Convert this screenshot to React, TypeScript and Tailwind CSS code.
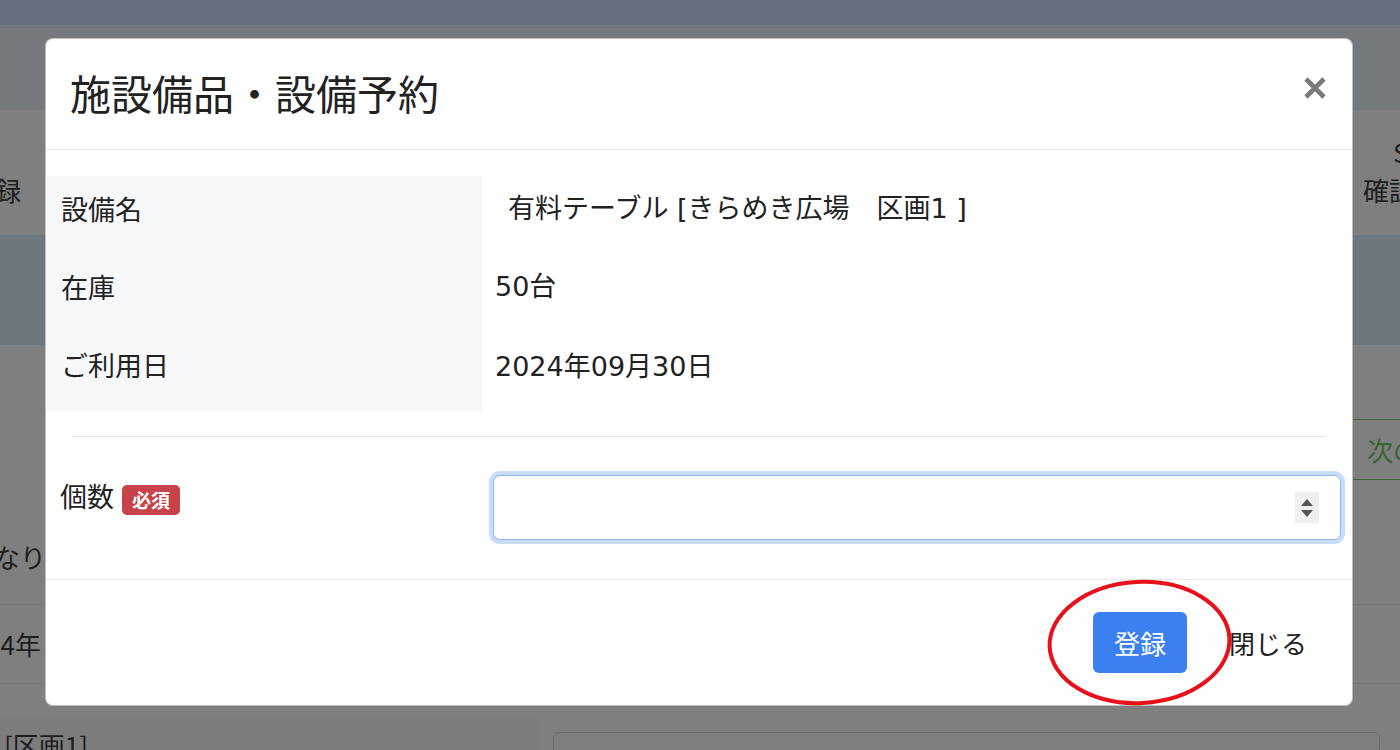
import React from "react";

function CloseIcon() {
  return (
    <svg width="24" height="24" viewBox="0 0 24 24">
      <path d="M3 3 L21 21 M21 3 L3 21" stroke="#7a7a7a" strokeWidth="4.6" strokeLinecap="butt" />
    </svg>
  );
}

function Spinner() {
  return (
    <div className="w-[24px] h-[31px] bg-[#efefef] flex flex-col items-center justify-center gap-[4px]">
      <svg width="12" height="7" viewBox="0 0 12 7">
        <path d="M6 0 L12 7 L0 7 Z" fill="#555" />
      </svg>
      <svg width="12" height="7" viewBox="0 0 12 7">
        <path d="M0 0 L12 0 L6 7 Z" fill="#555" />
      </svg>
    </div>
  );
}

export default function App() {
  return (
    <div className="relative w-[1400px] h-[750px] overflow-hidden bg-[#7f7f7f] font-['Noto_Sans_CJK_JP','Noto_Sans',sans-serif] text-[#1e1e1e]">
      {/* dimmed page behind the modal */}
      <div className="h-[25px] bg-[#64727b]" />
      <div className="h-[85px] bg-[#75787c]" />
      <div className="h-[125px] flex justify-between items-end pb-[26px] text-[26px] leading-[38px]">
        <div className="w-[21px] overflow-hidden flex justify-end whitespace-nowrap">登録</div>
        <div className="w-[37px] overflow-hidden whitespace-nowrap">
          <div className="pl-[30px]">S</div>
          <div>確認</div>
        </div>
      </div>
      <div className="h-[110px] bg-[#6d777e]" />
      <div className="h-[74px]" />
      <div className="h-[61px] flex justify-end">
        <div className="w-[47px] border-y border-[#3a6338] overflow-hidden whitespace-nowrap pl-[14px] text-[26px] leading-[59px] text-[#356632]">
          次の
        </div>
      </div>
      <div className="h-[125px] border-b border-[#737373] flex items-end pb-[29px] text-[26px] leading-[36px]">
        <div className="w-[46px] overflow-hidden flex justify-end whitespace-nowrap">異なり</div>
      </div>
      <div className="h-[79px] border-b border-[#737373] flex items-center text-[26px] leading-[36px]">
        <div className="w-[41px] overflow-hidden flex justify-end whitespace-nowrap">2024年</div>
      </div>
      <div className="flex">
        <div className="w-[540px] mt-[35px] h-[60px] bg-[#7c7c7c] pl-[4px] pt-[8px] text-[26px] leading-[36px] whitespace-nowrap">
          [区画1]
        </div>
        <div className="ml-[13px] mt-[48px] h-[60px] flex-1 mr-[20px] border border-[#6e6e6e] rounded-[6px]" />
      </div>

      {/* modal */}
      <div className="absolute left-[45px] top-[38px] w-[1308px] h-[668px] bg-white rounded-[8px] border border-[rgba(0,0,0,0.25)] flex flex-col text-[#222]">
        <div className="h-[111px] shrink-0 border-b border-[#e8e8e8] flex items-center justify-between pl-[24px] pr-[25px]">
          <h4 className="text-[41px] leading-[48px] font-normal text-[#222] mb-[4px]">施設備品・設備予約</h4>
          <button className="w-[24px] h-[24px] flex items-center justify-center mb-[12px]">
            <CloseIcon />
          </button>
        </div>

        <div className="h-[429px] shrink-0 pt-[26px]">
          <div className="grid grid-cols-[436px_1fr] text-[27px] leading-[38px] text-[#222]">
            <div className="h-[78px] bg-[#f7f8fa] pl-[15px] pt-[14px]">設備名</div>
            <div className="h-[78px] pl-[26px] pt-[14px] whitespace-nowrap font-['DejaVu_Sans','Noto_Sans_CJK_JP',sans-serif]">
              有料テーブル [きらめき広場　区画1 ]
            </div>
            <div className="h-[78px] bg-[#f7f8fa] pl-[15px] pt-[14px]">在庫</div>
            <div className="h-[78px] pl-[13px] pt-[14px] font-['DejaVu_Sans','Noto_Sans_CJK_JP',sans-serif]">50台</div>
            <div className="h-[79px] bg-[#f7f8fa] pl-[15px] pt-[14px]">ご利用日</div>
            <div className="h-[79px] pl-[13px] pt-[16px] font-['DejaVu_Sans','Noto_Sans_CJK_JP',sans-serif]">2024年09月30日</div>
          </div>

          <div className="mx-[26px] mt-[25px] border-t border-[#e6e6e6]" />

          <div className="mt-[38px] flex">
            <div className="w-[447px] pl-[14px] pt-[2px] flex items-start text-[27px] leading-[38px]">
              <span>個数</span>
              <span className="ml-[8px] mt-[8px] h-[30px] px-[10px] rounded-[5px] bg-[#c8424a] text-white text-[19px] leading-[30px] font-bold">
                必須
              </span>
            </div>
            <div className="w-[848px] h-[65px] border border-[#8db7f3] rounded-[7px] shadow-[0_0_0_4px_rgba(60,130,240,0.28)] bg-white flex items-center justify-end pr-[21px]">
              <Spinner />
            </div>
          </div>
        </div>

        <div className="flex-1 border-t border-[#e8e8e8] flex items-center justify-end pr-[45px]">
          <button className="w-[94px] h-[61px] rounded-[6px] bg-[#3b7ff1] text-white text-[26px] leading-[61px]">
            登録
          </button>
          <span className="ml-[42px] text-[26px] leading-[36px] text-[#222]">閉じる</span>
        </div>
      </div>

      {/* red annotation */}
      <svg className="absolute left-[1045px] top-[578px]" width="190" height="130" viewBox="0 0 190 130">
        <ellipse cx="94.5" cy="64.5" rx="90" ry="60.5" fill="none" stroke="#e8101a" strokeWidth="4" transform="rotate(-3 94.5 64.5)" />
      </svg>
    </div>
  );
}
